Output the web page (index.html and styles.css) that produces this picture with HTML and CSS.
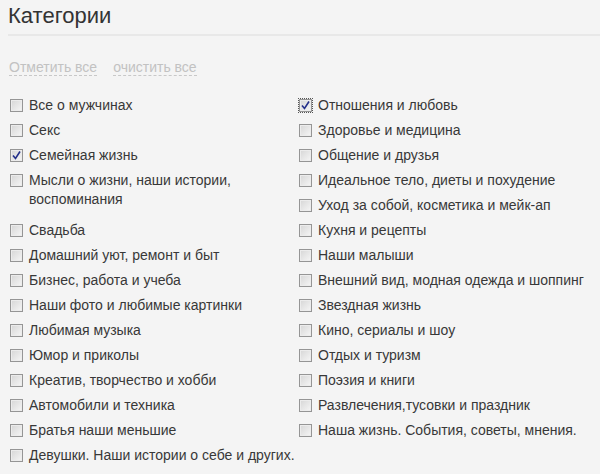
FILE: index.html
```html
<!DOCTYPE html>
<html>
  <head>
    <title>Категории</title>
    <link rel="stylesheet" href="styles.css">
  </head>
  <body>
    <div class="categories">
      <h2 class="title">Категории</h2>

      <div class="links">
        <a class="link">Отметить все</a>
        <a class="link">очистить все</a>
      </div>

      <div class="columns">
        <ul class="column">
          <li class="item"><span class="box"></span><span class="label">Все о мужчинах</span></li>
          <li class="item"><span class="box"></span><span class="label">Секс</span></li>
          <li class="item"><span class="box checked"><svg viewBox="0 0 13 13"><path d="M3 6.5 L5.5 9.5 L10 2.5" /></svg></span><span class="label">Семейная жизнь</span></li>
          <li class="item item-tall"><span class="box"></span><span class="label">Мысли о жизни, наши истории, воспоминания</span></li>
          <li class="item"><span class="box"></span><span class="label">Свадьба</span></li>
          <li class="item"><span class="box"></span><span class="label">Домашний уют, ремонт и быт</span></li>
          <li class="item"><span class="box"></span><span class="label">Бизнес, работа и учеба</span></li>
          <li class="item"><span class="box"></span><span class="label">Наши фото и любимые картинки</span></li>
          <li class="item"><span class="box"></span><span class="label">Любимая музыка</span></li>
          <li class="item"><span class="box"></span><span class="label">Юмор и приколы</span></li>
          <li class="item"><span class="box"></span><span class="label">Креатив, творчество и хобби</span></li>
          <li class="item"><span class="box"></span><span class="label">Автомобили и техника</span></li>
          <li class="item"><span class="box"></span><span class="label">Братья наши меньшие</span></li>
          <li class="item"><span class="box"></span><span class="label">Девушки. Наши истории о себе и других.</span></li>
        </ul>

        <ul class="column">
          <li class="item"><span class="box checked focused"><svg viewBox="0 0 13 13"><path d="M3 6.5 L5.5 9.5 L10 2.5" /></svg></span><span class="label">Отношения и любовь</span></li>
          <li class="item"><span class="box"></span><span class="label">Здоровье и медицина</span></li>
          <li class="item"><span class="box"></span><span class="label">Общение и друзья</span></li>
          <li class="item"><span class="box"></span><span class="label">Идеальное тело, диеты и похудение</span></li>
          <li class="item"><span class="box"></span><span class="label">Уход за собой, косметика и мейк-ап</span></li>
          <li class="item"><span class="box"></span><span class="label">Кухня и рецепты</span></li>
          <li class="item"><span class="box"></span><span class="label">Наши малыши</span></li>
          <li class="item"><span class="box"></span><span class="label">Внешний вид, модная одежда и шоппинг</span></li>
          <li class="item"><span class="box"></span><span class="label">Звездная жизнь</span></li>
          <li class="item"><span class="box"></span><span class="label">Кино, сериалы и шоу</span></li>
          <li class="item"><span class="box"></span><span class="label">Отдых и туризм</span></li>
          <li class="item"><span class="box"></span><span class="label">Поэзия и книги</span></li>
          <li class="item"><span class="box"></span><span class="label">Развлечения,тусовки и праздник</span></li>
          <li class="item"><span class="box"></span><span class="label">Наша жизнь. События, советы, мнения.</span></li>
        </ul>
      </div>
    </div>
  </body>
</html>
```

FILE: styles.css
```css
body {
  margin: 0;
  background-color: #f4f4f4;
  color: #383838;
  font-family: "Liberation Sans", Arial, sans-serif;
}

.categories {
  padding-left: 8px;
}

.title {
  margin: 3px 0 0 0;
  padding-bottom: 5px;
  border-bottom: 2px solid #e8e8e8;
  font-size: 22px;
  font-weight: normal;
  line-height: 26px;
  color: #333333;
}

.links {
  margin-top: 24px;
  padding-left: 1px;
  display: flex;
  gap: 16px;
  font-size: 14px;
  line-height: 20px;
}

.link {
  color: #c2c2c2;
  border-bottom: 1px dashed #c8c8c8;
  line-height: 15px;
  align-self: center;
}

.columns {
  margin-top: 19px;
  padding-left: 2px;
  display: grid;
  grid-template-columns: 289px 1fr;
  align-items: start;
}

/* each category takes one 25px slot, a wrapped one takes two */
.column {
  margin: 0;
  padding: 0;
  list-style: none;
  display: grid;
  grid-auto-rows: 25px;
}

.item {
  display: flex;
  align-items: flex-start;
  padding-top: 1px;
  font-size: 14px;
  line-height: 19px;
}

.item-tall {
  grid-row: span 2;
}

.box {
  flex: none;
  box-sizing: border-box;
  width: 13px;
  height: 13px;
  margin-top: 3px;
  margin-right: 6px;
  border: 1px solid #959595;
  background: linear-gradient(135deg, #d6d6d6, #f6f6f6);
  box-shadow: inset 0 0 0 1px #ececec;
  position: relative;
}

.box svg {
  position: absolute;
  left: -1px;
  top: -1px;
  width: 13px;
  height: 13px;
}

.box path {
  fill: none;
  stroke: #24308a;
  stroke-width: 1.6;
}

.focused {
  outline: 1px dotted #555555;
  outline-offset: 0;
}

.label {
  flex: 1;
}
```
